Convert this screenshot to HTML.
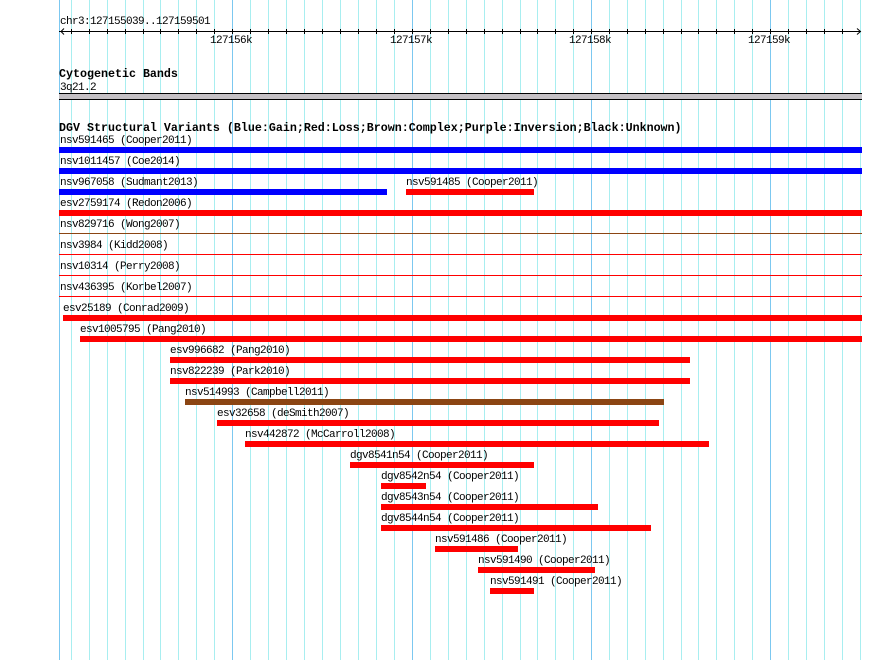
<!DOCTYPE html>
<html><head><meta charset="utf-8"><title>Genome browser</title>
<style>
html,body{margin:0;padding:0;background:#fff;width:890px;height:660px;overflow:hidden}
svg{display:block;position:absolute;left:0;top:0}
text{font-family:"Liberation Mono",monospace;font-size:11px;letter-spacing:-.6px;fill:#000;white-space:pre}
text.b{font-weight:bold;font-size:11.67px;letter-spacing:0}
</style></head><body>
<svg width="890" height="660" viewBox="0 0 890 660" xmlns="http://www.w3.org/2000/svg">
<g shape-rendering="crispEdges" fill="none" stroke-width="1">
<path stroke="#a8eef0" d="M71.5 0V660M89.5 0V660M107.5 0V660M125.5 0V660M143.5 0V660M160.5 0V660M178.5 0V660M196.5 0V660M214.5 0V660M250.5 0V660M268.5 0V660M286.5 0V660M304.5 0V660M322.5 0V660M340.5 0V660M358.5 0V660M376.5 0V660M394.5 0V660M430.5 0V660M448.5 0V660M466.5 0V660M484.5 0V660M502.5 0V660M520.5 0V660M537.5 0V660M555.5 0V660M573.5 0V660M609.5 0V660M627.5 0V660M645.5 0V660M663.5 0V660M681.5 0V660M698.5 0V660M716.5 0V660M734.5 0V660M752.5 0V660M788.5 0V660M806.5 0V660M824.5 0V660M842.5 0V660M860.5 0V660"/>
<path stroke="#7cc8f0" d="M59.5 0V660M232.5 0V660M412.5 0V660M591.5 0V660M770.5 0V660"/>
<path stroke="#000" d="M59 31.5H861M71.5 29V34M89.5 29V34M107.5 29V34M125.5 29V34M143.5 29V34M160.5 29V34M178.5 29V34M196.5 29V34M214.5 29V34M232.5 29V34M250.5 29V34M268.5 29V34M286.5 29V34M304.5 29V34M322.5 29V34M340.5 29V34M358.5 29V34M376.5 29V34M394.5 29V34M412.5 29V34M430.5 29V34M448.5 29V34M466.5 29V34M484.5 29V34M502.5 29V34M520.5 29V34M537.5 29V34M555.5 29V34M573.5 29V34M591.5 29V34M609.5 29V34M627.5 29V34M645.5 29V34M663.5 29V34M681.5 29V34M698.5 29V34M716.5 29V34M734.5 29V34M752.5 29V34M770.5 29V34M788.5 29V34M806.5 29V34M824.5 29V34M842.5 29V34"/>
</g>
<path d="M64 28.5L61 31.5L64 34.5M857 28.5L860.5 31.5L857 34.5" fill="none" stroke="#000" stroke-width="1"/>
<g shape-rendering="crispEdges">
<rect x="59" y="93" width="803" height="7" fill="#c4c0c4"/>
<rect x="59" y="93" width="803" height="1" fill="#000"/>
<rect x="59" y="99" width="803" height="1" fill="#000"/>
<g fill="#0000ff">
<rect x="59" y="147" width="803" height="6"/>
<rect x="59" y="168" width="803" height="6"/>
<rect x="59" y="189" width="328" height="6"/>
</g>
<g fill="#ff0000">
<rect x="406" y="189" width="128" height="6"/>
<rect x="59" y="210" width="803" height="6"/>
<rect x="59" y="254" width="803" height="1"/>
<rect x="59" y="275" width="803" height="1"/>
<rect x="59" y="296" width="803" height="1"/>
<rect x="63" y="315" width="799" height="6"/>
<rect x="80" y="336" width="782" height="6"/>
<rect x="170" y="357" width="520" height="6"/>
<rect x="170" y="378" width="520" height="6"/>
<rect x="217" y="420" width="442" height="6"/>
<rect x="245" y="441" width="464" height="6"/>
<rect x="350" y="462" width="184" height="6"/>
<rect x="381" y="483" width="45" height="6"/>
<rect x="381" y="504" width="217" height="6"/>
<rect x="381" y="525" width="270" height="6"/>
<rect x="435" y="546" width="83" height="6"/>
<rect x="478" y="567" width="117" height="6"/>
<rect x="490" y="588" width="44" height="6"/>
</g>
<g fill="#8b4513">
<rect x="59" y="233" width="803" height="1"/>
<rect x="185" y="399" width="479" height="6"/>
</g>
</g>
<g transform="translate(0,-1)">
<text x="60" y="25">chr3:127155039..127159501</text>
<text x="210" y="44">127156k</text>
<text x="390" y="44">127157k</text>
<text x="569" y="44">127158k</text>
<text x="748" y="44">127159k</text>
<text class="b" x="59" y="78">Cytogenetic Bands</text>
<text x="60" y="91">3q21.2</text>
<text class="b" x="59" y="132">DGV Structural Variants (Blue:Gain;Red:Loss;Brown:Complex;Purple:Inversion;Black:Unknown)</text>
<text x="60" y="144">nsv591465 (Cooper2011)</text>
<text x="60" y="165">nsv1011457 (Coe2014)</text>
<text x="60" y="186">nsv967058 (Sudmant2013)</text>
<text x="406" y="186">nsv591485 (Cooper2011)</text>
<text x="60" y="207">esv2759174 (Redon2006)</text>
<text x="60" y="228">nsv829716 (Wong2007)</text>
<text x="60" y="249">nsv3984 (Kidd2008)</text>
<text x="60" y="270">nsv10314 (Perry2008)</text>
<text x="60" y="291">nsv436395 (Korbel2007)</text>
<text x="63" y="312">esv25189 (Conrad2009)</text>
<text x="80" y="333">esv1005795 (Pang2010)</text>
<text x="170" y="354">esv996682 (Pang2010)</text>
<text x="170" y="375">nsv822239 (Park2010)</text>
<text x="185" y="396">nsv514993 (Campbell2011)</text>
<text x="217" y="417">esv32658 (deSmith2007)</text>
<text x="245" y="438">nsv442872 (McCarroll2008)</text>
<text x="350" y="459">dgv8541n54 (Cooper2011)</text>
<text x="381" y="480">dgv8542n54 (Cooper2011)</text>
<text x="381" y="501">dgv8543n54 (Cooper2011)</text>
<text x="381" y="522">dgv8544n54 (Cooper2011)</text>
<text x="435" y="543">nsv591486 (Cooper2011)</text>
<text x="478" y="564">nsv591490 (Cooper2011)</text>
<text x="490" y="585">nsv591491 (Cooper2011)</text>
</g>
</svg>
</body></html>
